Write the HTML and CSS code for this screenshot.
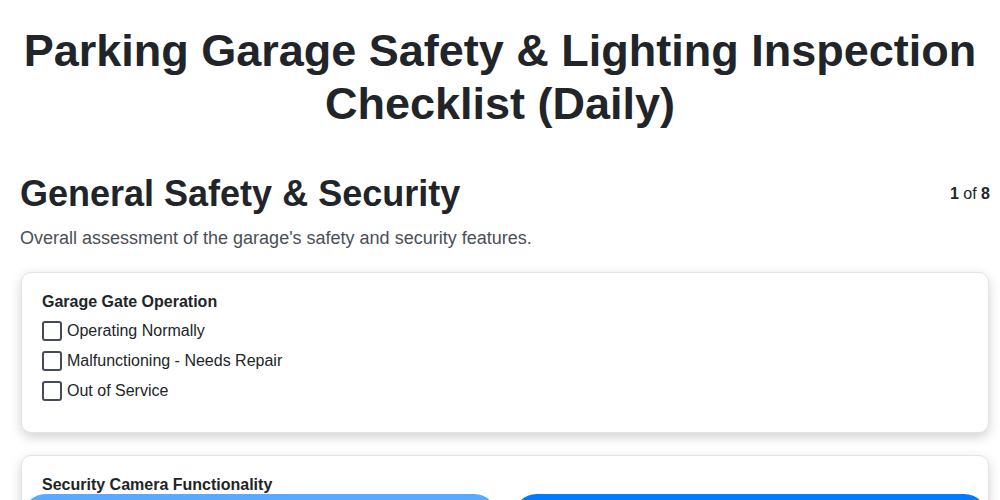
FILE: index.html
```html
<!DOCTYPE html>
<html>
<head>
<meta charset="utf-8">
<link rel="stylesheet" href="styles.css">
</head>
<body>
<div class="page">
  <h1 class="title">Parking Garage Safety &amp; Lighting Inspection Checklist (Daily)</h1>
  <div class="section">
    <div class="section-head">
      <h2 class="section-title">General Safety &amp; Security</h2>
      <div class="counter"><b>1</b> of <b>8</b></div>
    </div>
    <p class="section-desc">Overall assessment of the garage's safety and security features.</p>

    <div class="card">
      <div class="q-label">Garage Gate Operation</div>
      <label class="opt"><span class="box"></span>Operating Normally</label>
      <label class="opt"><span class="box"></span>Malfunctioning - Needs Repair</label>
      <label class="opt"><span class="box"></span>Out of Service</label>
    </div>

    <div class="card">
      <div class="q-label">Security Camera Functionality</div>
      <label class="opt"><span class="box"></span>All Cameras Operational</label>
      <label class="opt"><span class="box"></span>Some Cameras Offline</label>
      <label class="opt"><span class="box"></span>All Cameras Offline</label>
    </div>
  </div>
</div>
<div class="nav">
  <button class="btn btn-prev" disabled>Previous</button>
  <button class="btn btn-next">Next</button>
</div>
</body>
</html>
```
FILE: styles.css
```css
* { box-sizing: border-box; }
html, body { margin: 0; padding: 0; background: #fff; }
body {
  font-family: "Liberation Sans", Arial, sans-serif;
  color: #212529;
}
.page {
  padding: 0 10px 80px;
}
.section {
  padding-left: 10px;
}
.title {
  margin: 0;
  padding-top: 24px;
  font-size: 45px;
  line-height: 53px;
  font-weight: 700;
  text-align: center;
  color: #212529;
}
.section-head {
  display: flex;
  justify-content: space-between;
  align-items: center;
  margin-top: 43px;
}
.section-title {
  margin: 0;
  font-size: 36px;
  line-height: 42px;
  font-weight: 700;
}
.counter {
  font-size: 16px;
  color: #212529;
}
.section-desc {
  margin: 11px 0 0;
  font-size: 18px;
  line-height: 24px;
  color: #495057;
}
.card {
  margin: 22px 1px 21px 1px;
  border: 1px solid #e2e3ea;
  border-radius: 10px;
  background: #fff;
  box-shadow: 0 4px 12px rgba(0, 0, 0, 0.18);
  padding: 19px 20px 26px;
}
.q-label {
  font-size: 16px;
  font-weight: 700;
  line-height: 20px;
  margin-bottom: 4px;
}
.opt {
  display: flex;
  align-items: center;
  height: 30px;
  font-size: 16px;
  color: #212529;
}
.box {
  width: 20px;
  height: 20px;
  border: 2px solid #474a59;
  border-radius: 3px;
  margin-right: 5px;
  flex: none;
}
.nav {
  position: fixed;
  left: 22px;
  right: 12px;
  top: 494px;
  display: flex;
  gap: 15px;
}
.btn {
  flex: 1;
  height: 48px;
  border: none;
  border-radius: 24px;
  color: #fff;
  font-family: "Liberation Sans", Arial, sans-serif;
  font-size: 16px;
  font-weight: 700;
}
.btn-prev { background: #59a9ff; }
.btn-next { background: #007bff; }
```
